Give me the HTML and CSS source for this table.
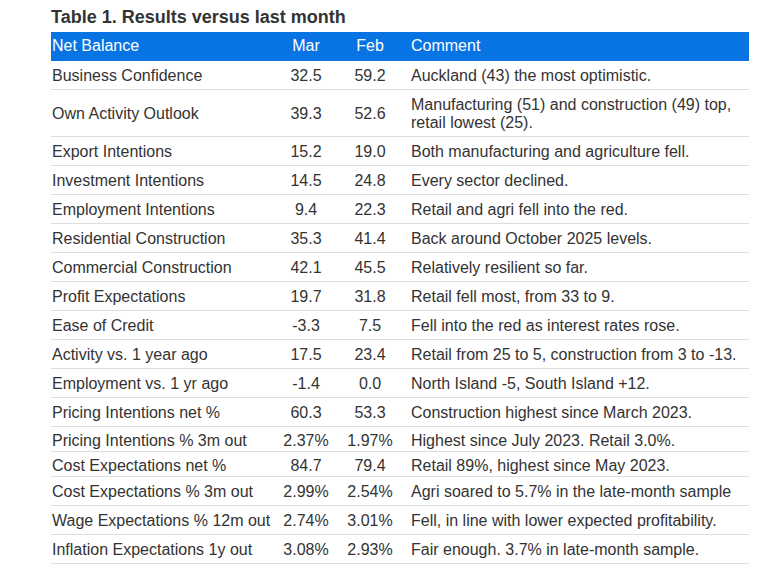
FILE: index.html
```html
<!DOCTYPE html>
<html>
<head>
<meta charset="utf-8">
<link rel="stylesheet" href="styles.css">
</head>
<body>
<div class="wrap">
  <h3 class="title">Table 1. Results versus last month</h3>
  <table class="results">
    <colgroup>
      <col class="c-label"><col class="c-mar"><col class="c-feb"><col class="c-comment">
    </colgroup>
    <thead>
      <tr><th class="lbl">Net Balance</th><th class="num">Mar</th><th class="num">Feb</th><th class="cmt">Comment</th></tr>
    </thead>
    <tbody>
      <tr><td class="lbl">Business Confidence</td><td class="num">32.5</td><td class="num">59.2</td><td class="cmt">Auckland (43) the most optimistic.</td></tr>
      <tr><td class="lbl">Own Activity Outlook</td><td class="num">39.3</td><td class="num">52.6</td><td class="cmt">Manufacturing (51) and construction (49) top, retail lowest (25).</td></tr>
      <tr><td class="lbl">Export Intentions</td><td class="num">15.2</td><td class="num">19.0</td><td class="cmt">Both manufacturing and agriculture fell.</td></tr>
      <tr><td class="lbl">Investment Intentions</td><td class="num">14.5</td><td class="num">24.8</td><td class="cmt">Every sector declined.</td></tr>
      <tr><td class="lbl">Employment Intentions</td><td class="num">9.4</td><td class="num">22.3</td><td class="cmt">Retail and agri fell into the red.</td></tr>
      <tr><td class="lbl">Residential Construction</td><td class="num">35.3</td><td class="num">41.4</td><td class="cmt">Back around October 2025 levels.</td></tr>
      <tr><td class="lbl">Commercial Construction</td><td class="num">42.1</td><td class="num">45.5</td><td class="cmt">Relatively resilient so far.</td></tr>
      <tr><td class="lbl">Profit Expectations</td><td class="num">19.7</td><td class="num">31.8</td><td class="cmt">Retail fell most, from 33 to 9.</td></tr>
      <tr><td class="lbl">Ease of Credit</td><td class="num">-3.3</td><td class="num">7.5</td><td class="cmt">Fell into the red as interest rates rose.</td></tr>
      <tr><td class="lbl">Activity vs. 1 year ago</td><td class="num">17.5</td><td class="num">23.4</td><td class="cmt">Retail from 25 to 5, construction from 3 to -13.</td></tr>
      <tr><td class="lbl">Employment vs. 1 yr ago</td><td class="num">-1.4</td><td class="num">0.0</td><td class="cmt">North Island -5, South Island +12.</td></tr>
      <tr><td class="lbl">Pricing Intentions net %</td><td class="num">60.3</td><td class="num">53.3</td><td class="cmt">Construction highest since March 2023.</td></tr>
      <tr class="tight"><td class="lbl">Pricing Intentions % 3m out</td><td class="num">2.37%</td><td class="num">1.97%</td><td class="cmt">Highest since July 2023. Retail 3.0%.</td></tr>
      <tr class="tight"><td class="lbl">Cost Expectations net %</td><td class="num">84.7</td><td class="num">79.4</td><td class="cmt">Retail 89%, highest since May 2023.</td></tr>
      <tr><td class="lbl">Cost Expectations % 3m out</td><td class="num">2.99%</td><td class="num">2.54%</td><td class="cmt">Agri soared to 5.7% in the late-month sample</td></tr>
      <tr><td class="lbl">Wage Expectations % 12m out</td><td class="num">2.74%</td><td class="num">3.01%</td><td class="cmt">Fell, in line with lower expected profitability.</td></tr>
      <tr><td class="lbl">Inflation Expectations 1y out</td><td class="num">3.08%</td><td class="num">2.93%</td><td class="cmt">Fair enough. 3.7% in late-month sample.</td></tr>
    </tbody>
  </table>
</div>
</body>
</html>
```
FILE: styles.css
```css
html, body {
  margin: 0;
  padding: 0;
  background: #ffffff;
}
body {
  font-family: "Liberation Sans", Arial, sans-serif;
  color: #333333;
}
.wrap {
  padding: 7px 0 0 51px;
  width: 698px;
}
.title {
  margin: 0 0 4px 0;
  font-size: 18px;
  font-weight: bold;
  color: #333333;
  line-height: 21px;
}
.results {
  width: 698px;
  border-collapse: collapse;
  table-layout: fixed;
  font-size: 16px;
  line-height: 18px;
}
.c-label { width: 220px; }
.c-mar { width: 70px; }
.c-feb { width: 58px; }
.c-comment { width: 350px; }
.results th {
  background: #0873e2;
  color: #ffffff;
  font-weight: normal;
  padding: 5px 0 6px 0;
  text-align: left;
}
.results td {
  padding: 6px 0 4px 0;
  border-bottom: 1px solid #dddddd;
  vertical-align: middle;
}
.results .tight td {
  padding-top: 5px;
  padding-bottom: 1px;
}
.results .lbl { padding-left: 1px; white-space: nowrap; }
.results .num { text-align: center; white-space: nowrap; }
.results .cmt { padding-left: 12px; padding-right: 4px; }
```
